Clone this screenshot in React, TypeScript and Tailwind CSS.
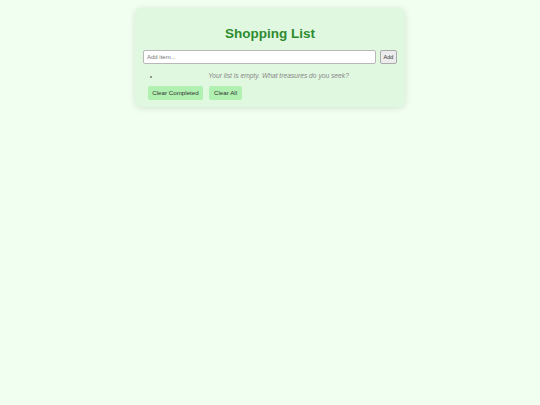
export default function App() {
  return (
    <div className="min-h-screen bg-[#f0fff0] pt-[8px] font-['Liberation_Sans',Arial,sans-serif]">
      <div className="mx-auto w-[270px] rounded-[6px] bg-[#e0f8e0] px-[8px] pt-[8px] pb-[7px] shadow-[0_1px_6px_rgba(0,0,0,0.12)]">
        <h1 className="mt-[10px] mb-[8px] text-center text-[13.5px] leading-[16px] font-bold text-[#2e8b2e]">
          Shopping List
        </h1>

        <div className="flex items-center gap-[4px]">
          <input
            type="text"
            placeholder="Add item..."
            className="h-[14px] flex-1 rounded-[2px] border border-[#b8b8b8] bg-white px-[3px] text-[6px] text-[#333] placeholder:text-[#777] outline-none"
          />
          <button className="h-[14px] w-[17px] rounded-[2px] border border-[#aaa] bg-[#ececec] text-[5.6px] text-[#333]">
            Add
          </button>
        </div>

        <ul className="mt-[8px] list-disc pl-[17px] text-[#888]">
          <li className="text-center text-[6.7px] leading-[8px] italic marker:text-[5px] marker:text-[#777]">
            Your list is empty. What treasures do you seek?
          </li>
        </ul>

        <div className="mt-[6px] flex gap-[6px] pl-[5px]">
          <button className="h-[14px] w-[55px] rounded-[2px] bg-[#b0f0b0] text-[6.2px] text-[#333]">
            Clear Completed
          </button>
          <button className="h-[14px] w-[33px] rounded-[2px] bg-[#b0f0b0] text-[6.2px] text-[#333]">
            Clear All
          </button>
        </div>
      </div>
    </div>
  )
}
